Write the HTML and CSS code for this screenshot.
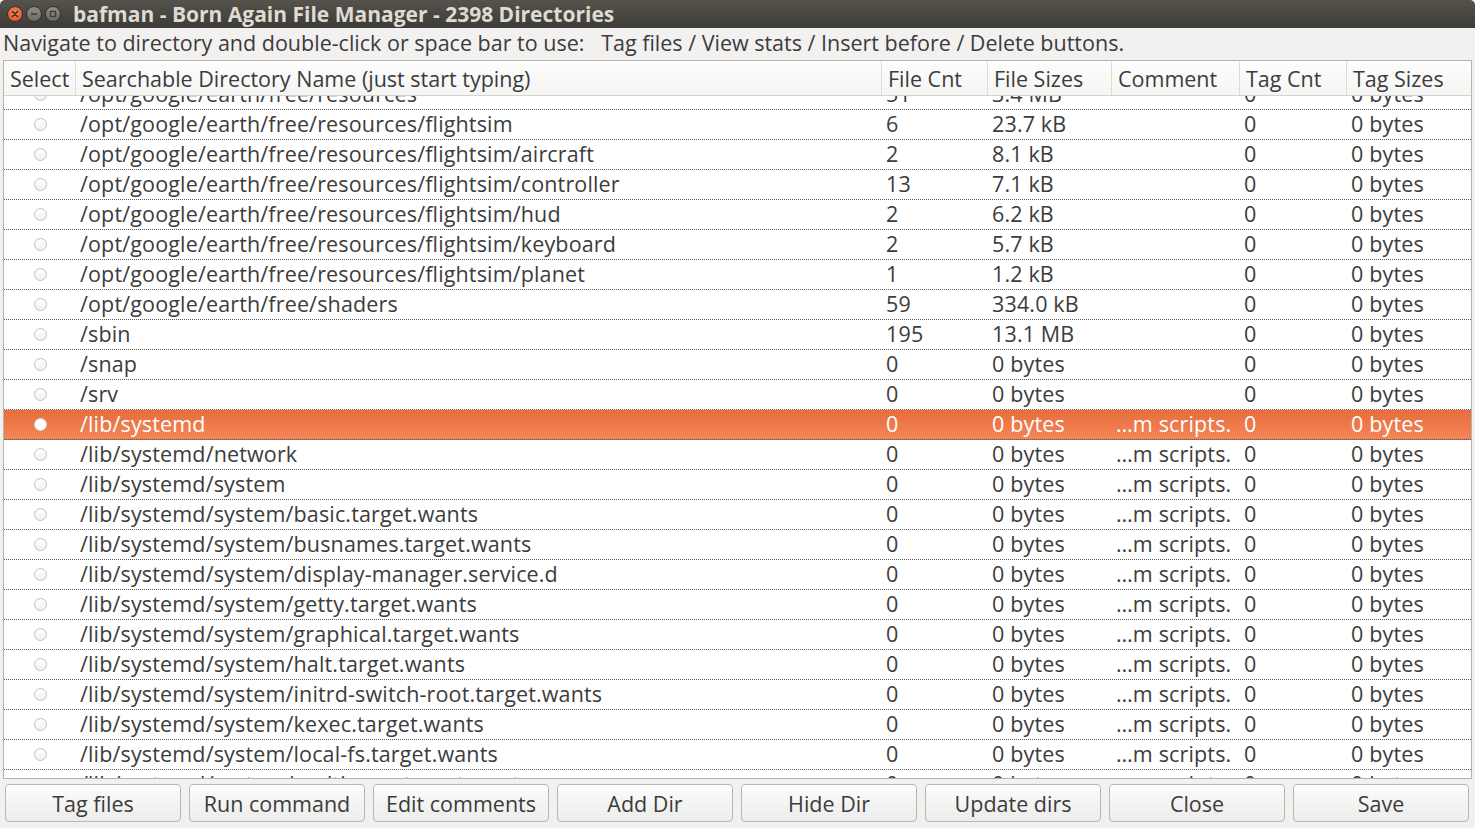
FILE: index.html
```html
<!DOCTYPE html>
<html>
<head>
<meta charset="utf-8">
<link rel="stylesheet" href="styles.css">
</head>
<body>
<div class="window">
  <div class="titlebar">
    <div class="wm">
      <span class="wm-btn close"><svg width="10" height="10" viewBox="0 0 10 10"><path d="M2.5 2.5 L7.5 7.5 M7.5 2.5 L2.5 7.5" stroke="#3a2a24" stroke-width="1.6" stroke-linecap="round"/></svg></span>
      <span class="wm-btn"><svg width="10" height="10" viewBox="0 0 10 10"><path d="M2 5 H8" stroke="#3c3b37" stroke-width="1.6"/></svg></span>
      <span class="wm-btn"><svg width="10" height="10" viewBox="0 0 10 10"><rect x="2.5" y="2.5" width="5" height="5" fill="none" stroke="#3c3b37" stroke-width="1.3"/></svg></span>
    </div>
    <span class="title">bafman - Born Again File Manager - 2398 Directories</span>
  </div>
  <div class="instructions">Navigate to directory and double-click or space bar to use:   Tag files / View stats / Insert before / Delete buttons.</div>
  <div class="table">
    <div class="thead">
      <div class="th">Select</div>
      <div class="th">Searchable Directory Name (just start typing)</div>
      <div class="th">File Cnt</div>
      <div class="th">File Sizes</div>
      <div class="th">Comment</div>
      <div class="th">Tag Cnt</div>
      <div class="th last">Tag Sizes</div>
    </div>
    <div class="tbody">
      <div class="rows" id="rows"></div>
    </div>
  </div>
  <div class="buttons">
    <button class="btn">Tag files</button>
    <button class="btn">Run command</button>
    <button class="btn">Edit comments</button>
    <button class="btn">Add Dir</button>
    <button class="btn">Hide Dir</button>
    <button class="btn">Update dirs</button>
    <button class="btn">Close</button>
    <button class="btn">Save</button>
  </div>
</div>
<script src="app.js"></script>
</body>
</html>
```

FILE: app.js
```js
var data = [
  ["/opt/google/earth/free/resources","51","3.4 MB",""],
  ["/opt/google/earth/free/resources/flightsim","6","23.7 kB",""],
  ["/opt/google/earth/free/resources/flightsim/aircraft","2","8.1 kB",""],
  ["/opt/google/earth/free/resources/flightsim/controller","13","7.1 kB",""],
  ["/opt/google/earth/free/resources/flightsim/hud","2","6.2 kB",""],
  ["/opt/google/earth/free/resources/flightsim/keyboard","2","5.7 kB",""],
  ["/opt/google/earth/free/resources/flightsim/planet","1","1.2 kB",""],
  ["/opt/google/earth/free/shaders","59","334.0 kB",""],
  ["/sbin","195","13.1 MB",""],
  ["/snap","0","0 bytes",""],
  ["/srv","0","0 bytes",""],
  ["/lib/systemd","0","0 bytes","\u2026m scripts.", true],
  ["/lib/systemd/network","0","0 bytes","\u2026m scripts."],
  ["/lib/systemd/system","0","0 bytes","\u2026m scripts."],
  ["/lib/systemd/system/basic.target.wants","0","0 bytes","\u2026m scripts."],
  ["/lib/systemd/system/busnames.target.wants","0","0 bytes","\u2026m scripts."],
  ["/lib/systemd/system/display-manager.service.d","0","0 bytes","\u2026m scripts."],
  ["/lib/systemd/system/getty.target.wants","0","0 bytes","\u2026m scripts."],
  ["/lib/systemd/system/graphical.target.wants","0","0 bytes","\u2026m scripts."],
  ["/lib/systemd/system/halt.target.wants","0","0 bytes","\u2026m scripts."],
  ["/lib/systemd/system/initrd-switch-root.target.wants","0","0 bytes","\u2026m scripts."],
  ["/lib/systemd/system/kexec.target.wants","0","0 bytes","\u2026m scripts."],
  ["/lib/systemd/system/local-fs.target.wants","0","0 bytes","\u2026m scripts."],
  ["/lib/systemd/system/multi-user.target.wants","0","0 bytes","\u2026m scripts."]
];
var rows = document.getElementById("rows");
data.forEach(function (d) {
  var r = document.createElement("div");
  r.className = "row" + (d[4] ? " selected" : "");
  var cells = [
    '<div class="td sel"><span class="radio"></span></div>',
    '<div class="td">' + d[0] + '</div>',
    '<div class="td">' + d[1] + '</div>',
    '<div class="td">' + d[2] + '</div>',
    '<div class="td">' + d[3] + '</div>',
    '<div class="td">0</div>',
    '<div class="td">0 bytes</div>'
  ];
  r.innerHTML = cells.join("");
  rows.appendChild(r);
});
```

FILE: styles.css
```css
html, body {
  margin: 0;
  padding: 0;
  background: #f2f1f0;
}
body {
  font-family: "Open Sans", "Noto Sans", sans-serif;
  color: #3c3c3c;
  font-size: 21.5px;
}
.window {
  width: 1475px;
  height: 828px;
  overflow: hidden;
  background: #f2f1f0;
}
.titlebar {
  height: 28px;
  background: linear-gradient(#56534c, #3c3b37);
  border-radius: 5px 5px 0 0;
  display: flex;
  align-items: center;
}
.wm {
  display: flex;
  gap: 3px;
  padding-left: 7px;
  width: 66px;
}
.wm-btn {
  width: 16px;
  height: 16px;
  border-radius: 50%;
  background: linear-gradient(#8f8c85, #6c6a64);
  border: 1px solid #35332f;
  box-sizing: border-box;
  display: flex;
  align-items: center;
  justify-content: center;
}
.wm-btn.close {
  background: radial-gradient(circle at 50% 40%, #f7875b, #e0461d);
}
.title {
  font-weight: bold;
  color: #dfdbd2;
  font-size: 21px;
  line-height: 28px;
}
.instructions {
  height: 32px;
  line-height: 30px;
  padding-left: 3px;
  white-space: pre;
}
.table {
  margin-left: 3px;
  width: 1469px;
  border: 1px solid #b6b3ae;
  box-sizing: border-box;
  background: #fff;
}
.thead, .row {
  display: grid;
  grid-template-columns: 72px 806px 106px 124px 128px 107px 124px;
}
.thead {
  height: 35px;
  background: linear-gradient(#fdfdfd, #f5f5f4);
  border-bottom: 1px solid #d6d4d0;
  box-sizing: border-box;
}
.th {
  padding-left: 6px;
  line-height: 35px;
  border-right: 1px solid #dedcd9;
  white-space: nowrap;
  overflow: hidden;
}
.th.last {
  border-right: none;
}
.tbody {
  height: 682px;
  overflow: hidden;
}
.rows {
  margin-top: -16px;
}
.row {
  height: 30px;
  box-sizing: border-box;
  border-bottom: 1px dotted #5a5a5a;
  background: #fff;
}
.row.selected {
  background: linear-gradient(#e96d3b, #f2855a);
  color: #fff;
}
.td {
  padding-left: 4px;
  line-height: 27px;
  white-space: nowrap;
  overflow: hidden;
  letter-spacing: 0.15px;
}
.td.sel {
  display: flex;
  align-items: center;
  justify-content: center;
  padding-left: 0;
}
.radio {
  width: 13px;
  height: 13px;
  border-radius: 50%;
  border: 1px solid #c3c1bd;
  box-sizing: border-box;
  background: linear-gradient(#ffffff, #f1f1f1);
}
.row.selected .radio {
  background: #fff;
  border-color: #d8d8d8;
}
.buttons {
  display: flex;
  gap: 8px;
  padding: 5px 0 0 5px;
}
.btn {
  width: 176px;
  height: 38px;
  font-family: inherit;
  font-size: 21.5px;
  color: #3c3c3c;
  background: linear-gradient(#fcfcfc, #ececeb);
  border: 1px solid #b9b7b3;
  border-radius: 4px;
  padding: 0;
}
```
